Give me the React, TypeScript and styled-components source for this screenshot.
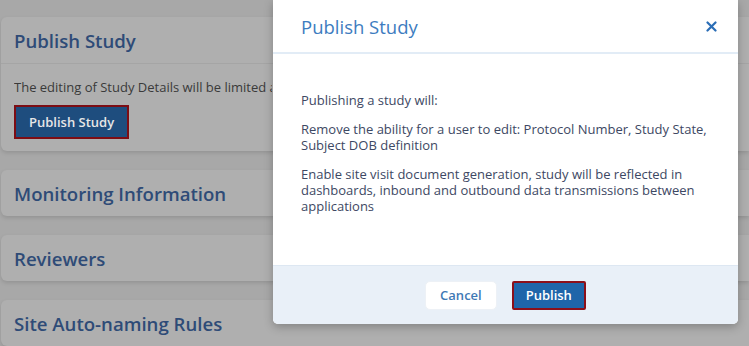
import React from 'react'
import styled, { createGlobalStyle } from 'styled-components'

const GlobalStyle = createGlobalStyle`
  body {
    margin: 0;
    background: #a8a8a8;
    font-family: "Open Sans", "Liberation Sans", sans-serif;
    overflow: hidden;
  }
`
const Page = styled.div`
  position: relative;
  height: 346px;
  padding-top: 17px;
  box-sizing: border-box;
  display: flex;
  flex-direction: column;
  gap: 19px;
`
const Card = styled.section`
  margin-left: 1px;
  background: #afafaf;
  border-radius: 6px 0 0 6px;
  box-shadow: 0 2px 4px rgba(0, 0, 0, 0.12);
`
const CardHeader = styled.div<{ $divided?: boolean }>`
  height: 46px;
  display: flex;
  align-items: center;
  padding: 0 13px;
  font-size: 18.6px;
  font-weight: 600;
  color: #2e4b77;
  border-bottom: ${p => (p.$divided ? '1px solid #a5a5a5' : 'none')};
`
const CardBody = styled.div`
  padding: 14px 13px 12px;
  font-size: 13px;
  color: #3a3a3a;
`
// the rest of the sentence sits under the dialog
const Blurb = styled.p`
  margin: 0 0 9px;
  width: 258px;
  white-space: nowrap;
  overflow: hidden;
`
const DimButton = styled.button`
  height: 34px;
  padding: 0 13px;
  background: #1e4d7e;
  color: #e6e6e6;
  border: 2px solid #7d0d14;
  font-family: inherit;
  font-size: 13px;
  font-weight: 600;
`
const Modal = styled.div`
  position: absolute;
  left: 273px;
  top: 0;
  width: 465px;
  background: #fff;
  border-radius: 0 0 5px 5px;
  box-shadow: 0 3px 10px rgba(0, 0, 0, 0.25);
  overflow: hidden;
`
const ModalHeader = styled.div`
  height: 54px;
  box-sizing: border-box;
  display: flex;
  align-items: center;
  justify-content: space-between;
  padding: 0 21px 0 28px;
  border-bottom: 2px solid #e2ecf6;
`
const ModalTitle = styled.h2`
  margin: 0;
  font-size: 18.5px;
  font-weight: 400;
  color: #3d7cc0;
`
const Close = styled.button`
  border: 0;
  background: none;
  padding: 0;
  display: flex;
  color: #2a6db6;
`
const ModalBody = styled.div`
  height: 211px;
  box-sizing: border-box;
  padding: 38px 28px 0;
  font-size: 13px;
  line-height: 16px;
  color: #3d4863;
`
const Para = styled.p`
  margin: 0 0 13px;
`
const ModalFooter = styled.div`
  height: 58px;
  background: #e9f0f8;
  border-top: 1px solid #dde7f2;
  display: flex;
  align-items: center;
  justify-content: center;
  gap: 15px;
`
const Action = styled.button<{ $primary?: boolean }>`
  height: 29px;
  padding: 0 ${p => (p.$primary ? '12px' : '14px')};
  font-family: inherit;
  font-size: 13px;
  font-weight: 600;
  border-radius: ${p => (p.$primary ? '2px' : '5px')};
  background: ${p => (p.$primary ? '#1f65a9' : '#fff')};
  color: ${p => (p.$primary ? '#fff' : '#3f79b5')};
  border: ${p => (p.$primary ? '2px solid #8c0f19' : '1px solid #edf1f6')};
`

export default function App() {
  return (
    <Page>
      <GlobalStyle />
      <Card>
        <CardHeader $divided>Publish Study</CardHeader>
        <CardBody>
          <Blurb>The editing of Study Details will be limited after the study is published.</Blurb>
          <DimButton>Publish Study</DimButton>
        </CardBody>
      </Card>
      <Card>
        <CardHeader>Monitoring Information</CardHeader>
      </Card>
      <Card>
        <CardHeader>Reviewers</CardHeader>
      </Card>
      <Card>
        <CardHeader>Site Auto-naming Rules</CardHeader>
      </Card>

      <Modal>
        <ModalHeader>
          <ModalTitle>Publish Study</ModalTitle>
          <Close aria-label="close">
            <svg width="11" height="11" viewBox="0 0 11 11">
              <path d="M1.5 1.5l8 8M9.5 1.5l-8 8" stroke="currentColor" strokeWidth="2.2" strokeLinecap="round" />
            </svg>
          </Close>
        </ModalHeader>
        <ModalBody>
          <Para>Publishing a study will:</Para>
          <Para>Remove the ability for a user to edit: Protocol Number, Study State, Subject DOB definition</Para>
          <Para>Enable site visit document generation, study will be reflected in dashboards, inbound and outbound data transmissions between applications</Para>
        </ModalBody>
        <ModalFooter>
          <Action>Cancel</Action>
          <Action $primary>Publish</Action>
        </ModalFooter>
      </Modal>
    </Page>
  )
}
